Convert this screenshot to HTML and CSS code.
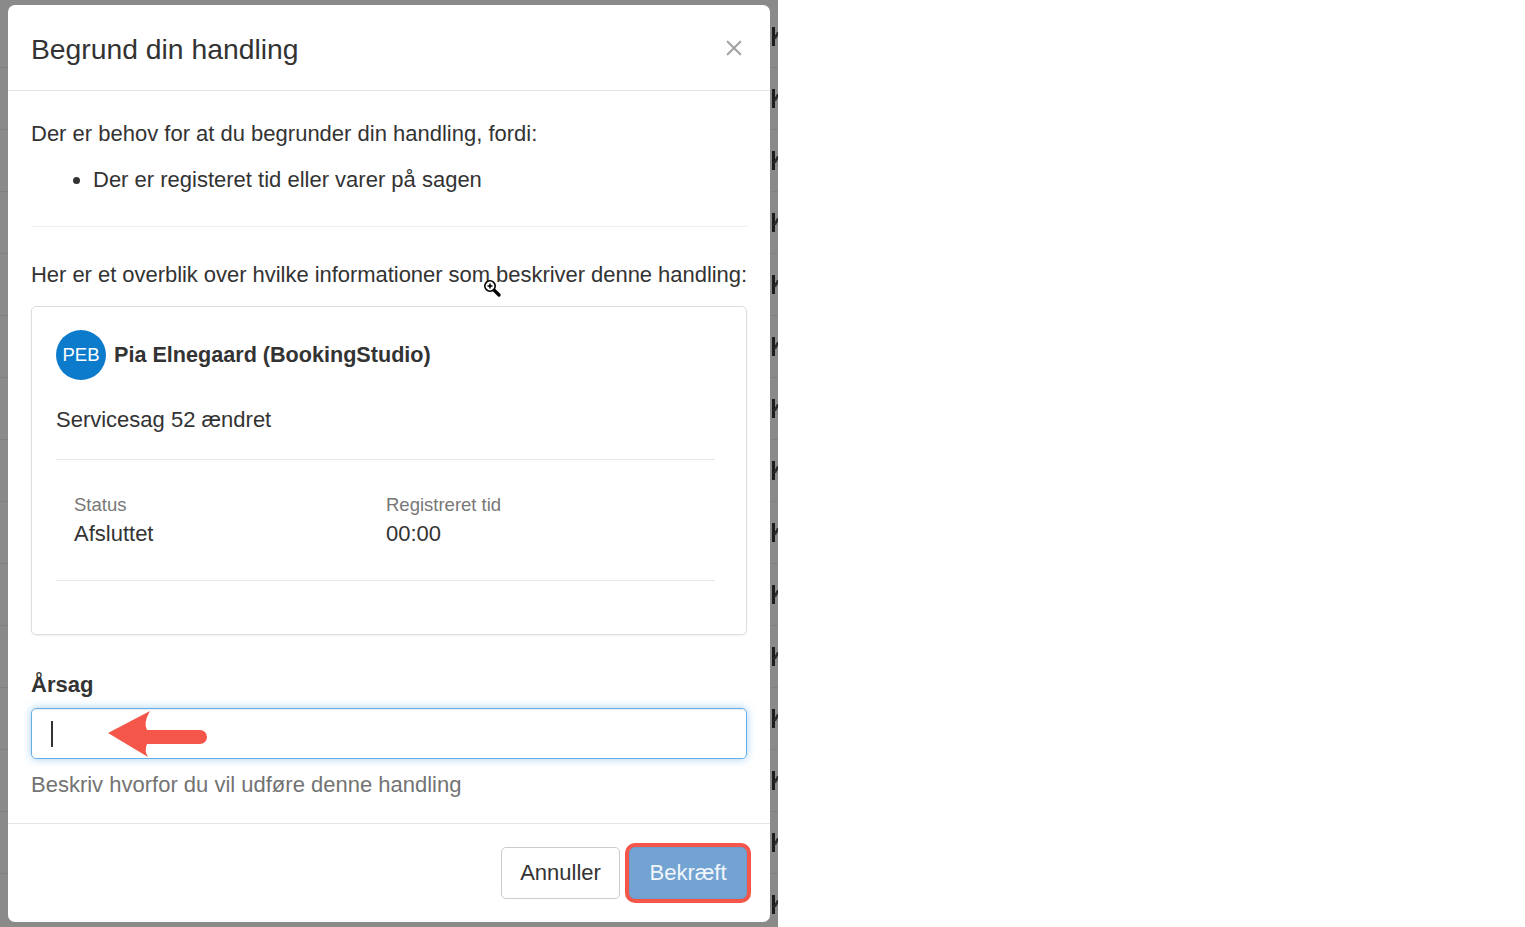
FILE: index.html
```html
<!DOCTYPE html>
<html lang="da">
<head>
  <meta charset="UTF-8">
  <title>Begrund din handling</title>
  <link rel="stylesheet" href="styles.css">
</head>
<body>
  <div class="backdrop">
    <div class="rows">
      <div class="row"><span class="edge"></span></div>
      <div class="row"><span class="edge"></span></div>
      <div class="row"><span class="edge"></span></div>
      <div class="row"><span class="edge"></span></div>
      <div class="row"><span class="edge"></span></div>
      <div class="row"><span class="edge"></span></div>
      <div class="row"><span class="edge"></span></div>
      <div class="row"><span class="edge"></span></div>
      <div class="row"><span class="edge"></span></div>
      <div class="row"><span class="edge"></span></div>
      <div class="row"><span class="edge"></span></div>
      <div class="row"><span class="edge"></span></div>
      <div class="row"><span class="edge"></span></div>
      <div class="row"><span class="edge"></span></div>
      <div class="row"><span class="edge"></span></div>
    </div>

    <!-- Modal -->
    <div class="modal">
      <div class="modal-header">
        <h4 class="modal-title">Begrund din handling</h4>
        <span class="close">
          <svg width="20" height="20" viewBox="0 0 20 20"><path d="M3 3 L17 17 M17 3 L3 17" stroke="#a3a3a3" stroke-width="2.4" stroke-linecap="round"/></svg>
        </span>
      </div>
      <div class="modal-body">
        <p class="intro">Der er behov for at du begrunder din handling, fordi:</p>
        <ul class="reasons">
          <li>Der er registeret tid eller varer på sagen</li>
        </ul>
        <hr class="divider">
        <p class="overblik">Her er et overblik over hvilke informationer som beskriver denne handling:</p>

        <div class="card">
          <div class="user">
            <span class="avatar">PEB</span>
            <span class="user-name">Pia Elnegaard (BookingStudio)</span>
          </div>
          <p class="event">Servicesag 52 ændret</p>
          <hr class="card-line">
          <div class="fields">
            <div class="field">
              <div class="field-label">Status</div>
              <div class="field-value">Afsluttet</div>
            </div>
            <div class="field">
              <div class="field-label">Registreret tid</div>
              <div class="field-value">00:00</div>
            </div>
          </div>
          <hr class="card-line">
        </div>

        <label class="aarsag-label">Årsag</label>
        <div class="aarsag-input">
          <span class="caret"></span>
          <svg class="arrow" width="110" height="52" viewBox="0 0 110 52">
            <path d="M2 26 L44 4 Q37 16 41 23 L94 23 A7 7 0 0 1 94 37 L41 37 Q38 44 42 50 Z" fill="#f4574a"/>
          </svg>
        </div>
        <p class="help">Beskriv hvorfor du vil udføre denne handling</p>
      </div>
      <div class="modal-footer">
        <button class="btn btn-default">Annuller</button>
        <button class="btn btn-primary">Bekræft</button>
      </div>
    </div>

    <svg class="zoom-cursor" width="18" height="18" viewBox="0 0 18 18">
      <path d="M10 10 L16 16" stroke="#000" stroke-width="3.2" stroke-linecap="round"/>
      <circle cx="7" cy="7" r="5.2" fill="#fff" stroke="#000" stroke-width="1.6"/>
      <path d="M4.5 7 H9.5 M7 4.5 V9.5" stroke="#000" stroke-width="1.5"/>
    </svg>
  </div>
</body>
</html>
```

FILE: styles.css
```css
body {
    margin: 0;
    background: #fff;
    font-family: "Liberation Sans", Arial, sans-serif;
    color: #333;
}
.backdrop {
    position: relative;
    width: 778px;
    height: 927px;
    overflow: hidden;
    background: #8a8a8a;
}
.rows { padding-top: 6px; }
.row {
    height: 61px;
    border-bottom: 1px solid #808080;
    display: flex;
    align-items: center;
    padding-left: 772px;
}
/* bits of the table behind the overlay */
.edge {
    position: relative;
    width: 3px;
    height: 19px;
    background: #1c1c1c;
}
.edge::after {
    content: "";
    position: absolute;
    left: 3px;
    top: 5px;
    width: 3px;
    height: 7px;
    background: #2a2a2a;
    transform: skewX(-30deg);
}

.modal {
    position: absolute;
    left: 8px;
    top: 5px;
    width: 762px;
    height: 917px;
    background: #fff;
    border-radius: 7px;
    box-sizing: border-box;
    display: flex;
    flex-direction: column;
}
.modal-header {
    height: 87px;
    box-sizing: border-box;
    border-bottom: 1px solid #e5e5e5;
    padding: 0 23px;
    display: flex;
    align-items: center;
    justify-content: space-between;
}
.modal-title {
    margin: 0;
    font-size: 28.3px;
    font-weight: normal;
    color: #333;
    padding-top: 3px;
}
.close {
    display: flex;
    margin-right: 4px;
    margin-top: 1px;
}
.close svg { width: 18px; height: 18px; }
.modal-body {
    padding: 28px 23px 23px 23px;
    font-size: 22px;
    line-height: 30px;
    flex: 1;
}
.intro { margin: 0; }
.reasons {
    margin: 16px 0 0 0;
    padding-left: 62px;
}
.divider {
    border: 0;
    border-top: 1px solid #eee;
    margin: 31px 0 33px 0;
}
.overblik {
    margin: 0;
    white-space: nowrap;
    letter-spacing: -0.04px;
}
.card {
    margin-top: 16px;
    border: 1px solid #ddd;
    border-radius: 5px;
    padding: 23px 31px 23px 24px;
    height: 329px;
    box-sizing: border-box;
    box-shadow: 0 1px 2px rgba(0, 0, 0, 0.06);
}
.user {
    display: flex;
    align-items: center;
    gap: 8px;
}
.avatar {
    width: 50px;
    height: 50px;
    border-radius: 50%;
    background: #0c7bcb;
    color: #fff;
    font-size: 18.5px;
    display: flex;
    align-items: center;
    justify-content: center;
}
.user-name { font-weight: bold; font-size: 21.6px; }
.event { margin: 25px 0 0 0; }
.card-line {
    border: 0;
    border-top: 1px solid #e8e8e8;
    margin: 24px 0 0 0;
}
.fields {
    display: grid;
    grid-template-columns: 312px 1fr;
    padding: 31px 0 30px 18px;
}
.field-label {
    font-size: 18.5px;
    line-height: 27px;
    color: #777;
}
.field-value { line-height: 32px; }
.fields + .card-line { margin-top: 0; }

.aarsag-label {
    display: block;
    font-weight: bold;
    margin-top: 35px;
}
.aarsag-input {
    position: relative;
    margin-top: 8px;
    height: 51px;
    border: 1px solid #66afe9;
    border-radius: 5px;
    box-sizing: border-box;
    box-shadow: inset 0 1px 1px rgba(0, 0, 0, 0.075), 0 0 8px rgba(102, 175, 233, 0.6);
    display: flex;
    align-items: center;
    padding-left: 19px;
}
.caret {
    width: 2px;
    height: 26px;
    background: #333;
}
.arrow {
    position: absolute;
    left: 74px;
    top: -2px;
}
.help {
    margin: 11px 0 0 0;
    color: #737373;
}
.modal-footer {
    border-top: 1px solid #e5e5e5;
    padding: 23px 23px 23px 0;
    display: flex;
    justify-content: flex-end;
    gap: 9px;
}
.btn {
    height: 52px;
    font-family: "Liberation Sans", Arial, sans-serif;
    font-size: 22px;
    border-radius: 5px;
    padding: 0 10px;
}
.btn-default {
    width: 119px;
    background: #fff;
    border: 1px solid #ccc;
    color: #333;
}
.btn-primary {
    width: 118px;
    background: #72a3d2;
    border: 1px solid #6c9dcc;
    color: #f1f6fb;
    box-shadow: 0 0 0 4px #f4574a;
    border-radius: 6px;
}
.zoom-cursor {
    position: absolute;
    left: 483px;
    top: 279px;
}
```
